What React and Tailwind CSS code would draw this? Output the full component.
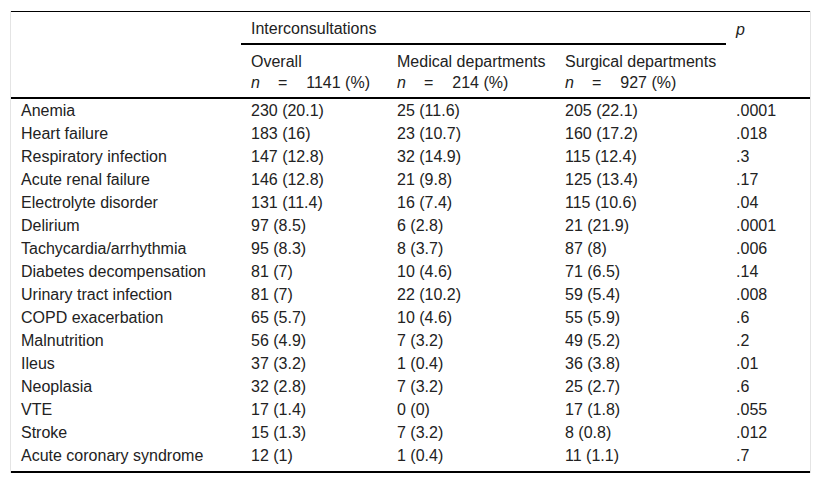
import React from "react";

const rows = [
  ["Anemia", "230 (20.1)", "25 (11.6)", "205 (22.1)", ".0001"],
  ["Heart failure", "183 (16)", "23 (10.7)", "160 (17.2)", ".018"],
  ["Respiratory infection", "147 (12.8)", "32 (14.9)", "115 (12.4)", ".3"],
  ["Acute renal failure", "146 (12.8)", "21 (9.8)", "125 (13.4)", ".17"],
  ["Electrolyte disorder", "131 (11.4)", "16 (7.4)", "115 (10.6)", ".04"],
  ["Delirium", "97 (8.5)", "6 (2.8)", "21 (21.9)", ".0001"],
  ["Tachycardia/arrhythmia", "95 (8.3)", "8 (3.7)", "87 (8)", ".006"],
  ["Diabetes decompensation", "81 (7)", "10 (4.6)", "71 (6.5)", ".14"],
  ["Urinary tract infection", "81 (7)", "22 (10.2)", "59 (5.4)", ".008"],
  ["COPD exacerbation", "65 (5.7)", "10 (4.6)", "55 (5.9)", ".6"],
  ["Malnutrition", "56 (4.9)", "7 (3.2)", "49 (5.2)", ".2"],
  ["Ileus", "37 (3.2)", "1 (0.4)", "36 (3.8)", ".01"],
  ["Neoplasia", "32 (2.8)", "7 (3.2)", "25 (2.7)", ".6"],
  ["VTE", "17 (1.4)", "0 (0)", "17 (1.8)", ".055"],
  ["Stroke", "15 (1.3)", "7 (3.2)", "8 (0.8)", ".012"],
  ["Acute coronary syndrome", "12 (1)", "1 (0.4)", "11 (1.1)", ".7"],
];

function N({ v }) {
  return (
    <span className="whitespace-nowrap">
      <i>n</i>
      <span className="ml-[18px]">=</span>
      <span className="ml-[19px]">{v} (%)</span>
    </span>
  );
}

export default function App() {
  return (
    <div className="w-[821px] h-[484px] bg-white pt-[11px] pl-[10px]" style={{ fontFamily: '"Liberation Sans", Arial, sans-serif' }}>
      <div className="w-[801px] border-x border-[#e4e4e4]">
        <table className="table-fixed w-[799px] border-collapse text-[16px] leading-[23px] text-[#222]">
          <colgroup>
            <col className="w-[230px]" />
            <col className="w-[146px]" />
            <col className="w-[168px]" />
            <col className="w-[171px]" />
            <col className="w-[84px]" />
          </colgroup>
          <thead>
            <tr className="border-t border-black">
              <th></th>
              <th colSpan={3} className="text-left font-normal pl-[10px] pt-[6px] pb-[4px] leading-[21px] border-b-2 border-black">
                Interconsultations
              </th>
              <th className="text-left font-normal italic pl-[10px] pt-[6px] pb-[4px] leading-[21px]">p</th>
            </tr>
            <tr className="border-b-2 border-black">
              <th></th>
              <th className="text-left font-normal pl-[10px] pt-[6px] pb-[4px] leading-[21px] align-top">
                <div>Overall</div>
                <N v="1141" />
              </th>
              <th className="text-left font-normal pl-[10px] pt-[6px] pb-[4px] leading-[21px] align-top">
                <div>Medical departments</div>
                <N v="214" />
              </th>
              <th className="text-left font-normal pl-[10px] pt-[6px] pb-[4px] leading-[21px] align-top">
                <div>Surgical departments</div>
                <N v="927" />
              </th>
              <th></th>
            </tr>
          </thead>
          <tbody className="border-b-2 border-black">
            {rows.map((r, i) => (
              <tr key={i}>
                {r.map((c, j) => (
                  <td key={j} className={"pl-[10px] whitespace-nowrap " + (i === rows.length - 1 ? "pb-[4px]" : "")}>
                    {c}
                  </td>
                ))}
              </tr>
            ))}
          </tbody>
        </table>
      </div>
    </div>
  );
}
